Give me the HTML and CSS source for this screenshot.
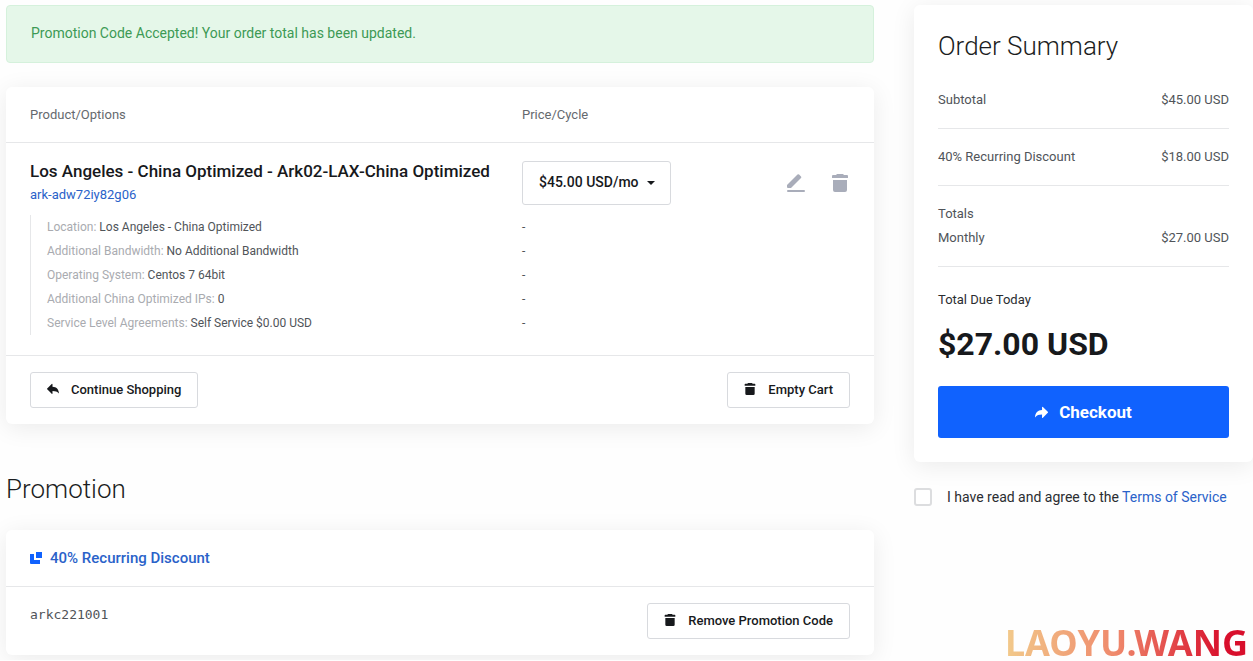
FILE: index.html
```html
<!DOCTYPE html>
<html lang="en">
<head>
  <meta charset="UTF-8">
  <meta name="viewport" content="width=device-width, initial-scale=1.0">
  <title>Review &amp; Checkout</title>
  <link rel="stylesheet" href="styles.css">
</head>
<body>
  <!-- shared icons -->
  <svg class="sprite" aria-hidden="true">
    <symbol id="trash" viewBox="0 0 16 18">
      <path d="M5 0h6l1 1h3a1 1 0 0 1 1 1v2H0V2a1 1 0 0 1 1-1h3zM1 6h14v10a2 2 0 0 1-2 2H3a2 2 0 0 1-2-2z"/>
    </symbol>
    <symbol id="pencil" viewBox="0 0 20 20">
      <path d="M1 12 11.500 1.500a1.200 1.200 0 0 1 1.600 0l1.900 1.900a1.200 1.200 0 0 1 0 1.600L5 15H2a1 1 0 0 1-1-1z"/>
      <rect x="1" y="17" width="18" height="2" rx="1"/>
    </symbol>
    <symbol id="reply" viewBox="0 0 12 12">
      <path d="M5.500 1.200v2.600C9.500 4 11.700 6.300 12 10.500c-1.800-2-3.500-2.600-6.500-2.600v2.600a.5.500 0 0 1-.8.300L.2 6.300a.6.600 0 0 1 0-.9L4.700.9a.5.500 0 0 1 .8.300z"/>
    </symbol>
    <symbol id="share" viewBox="0 0 12 12">
      <path d="M6.500 1.200v2.600C2.500 4 .3 6.300 0 10.500c1.800-2 3.500-2.600 6.500-2.600v2.600a.5.500 0 0 0 .8.300l4.500-4.500a.6.600 0 0 0 0-.9L7.300.9a.5.500 0 0 0-.8.300z"/>
    </symbol>
    <symbol id="promo" viewBox="0 0 12 12">
      <path d="M6 0h6v6H6zM0 2h4v6h6v4H1a1 1 0 0 1-1-1z"/>
    </symbol>
  </svg>

  <div class="wrap">
    <main>
      <div class="alert">Promotion Code Accepted! Your order total has been updated.</div>

      <form class="card" action="">
        <table class="cart">
          <thead>
            <tr>
              <th class="col-product">Product/Options</th>
              <th class="col-price">Price/Cycle</th>
              <th class="col-actions"></th>
            </tr>
          </thead>
          <tbody>
            <tr class="product">
              <td>
                <h2>Los Angeles - China Optimized - Ark02-LAX-China Optimized</h2>
                <a href="##">ark-adw72iy82g06</a>
              </td>
              <td>
                <div class="cycle">
                  <select aria-label="Billing cycle">
                    <option>$45.00 USD/mo</option>
                  </select>
                </div>
              </td>
              <td>
                <div class="actions">
                  <button type="button" aria-label="Edit"><svg width="20" height="20"><use href="#pencil"/></svg></button>
                  <button type="button" aria-label="Remove"><svg width="16" height="18"><use href="#trash"/></svg></button>
                </div>
              </td>
            </tr>
            <tr class="option">
              <td><div><span>Location:</span> Los Angeles - China Optimized</div></td>
              <td colspan="2">-</td>
            </tr>
            <tr class="option">
              <td><div><span>Additional Bandwidth:</span> No Additional Bandwidth</div></td>
              <td colspan="2">-</td>
            </tr>
            <tr class="option">
              <td><div><span>Operating System:</span> Centos 7 64bit</div></td>
              <td colspan="2">-</td>
            </tr>
            <tr class="option">
              <td><div><span>Additional China Optimized IPs:</span> 0</div></td>
              <td colspan="2">-</td>
            </tr>
            <tr class="option">
              <td><div><span>Service Level Agreements:</span> Self Service $0.00 USD</div></td>
              <td colspan="2">-</td>
            </tr>
          </tbody>
        </table>
        <div class="card-footer">
          <button class="btn" type="button"><svg width="12" height="12"><use href="#reply"/></svg>Continue Shopping</button>
          <button class="btn" type="button"><svg width="12" height="12"><use href="#trash"/></svg>Empty Cart</button>
        </div>
      </form>

      <h1>Promotion</h1>
      <section class="card">
        <h3 class="promo-title"><svg width="12" height="12"><use href="#promo"/></svg>40% Recurring Discount</h3>
        <div class="card-footer">
          <code>arkc221001</code>
          <button class="btn" type="button"><svg width="12" height="12"><use href="#trash"/></svg>Remove Promotion Code</button>
        </div>
      </section>
    </main>

    <aside>
      <div class="card summary">
        <h1>Order Summary</h1>
        <ul>
          <li><p><span>Subtotal</span><span>$45.00 USD</span></p></li>
          <li><p><span>40% Recurring Discount</span><span>$18.00 USD</span></p></li>
          <li>
            <p>Totals</p>
            <p><span>Monthly</span><span>$27.00 USD</span></p>
          </li>
        </ul>
        <p class="due">Total Due Today</p>
        <p class="amount">$27.00 USD</p>
        <button class="checkout" type="button"><svg width="13" height="13"><use href="#share"/></svg>Checkout</button>
      </div>
      <div class="terms">
        <input type="checkbox" id="tos">
        <label for="tos">I have read and agree to the <a href="##">Terms of Service</a></label>
      </div>
    </aside>
  </div>

  <div class="watermark">LAOYU.WANG</div>
</body>
</html>
```

FILE: styles.css
```css
* {
  box-sizing: border-box;
  margin: 0;
  padding: 0;
}
body {
  background-color: #fefefe;
  color: #505459;
  font-family: Roboto, "Liberation Sans", sans-serif;
  font-size: 13px;
  line-height: 24px;
  overflow-x: hidden;
}
a {
  color: #2a62c9;
  text-decoration: none;
}
button,
select,
input {
  font-family: inherit;
}
button {
  cursor: pointer;
}
svg {
  fill: currentColor;
}
.sprite {
  display: none;
}
.wrap {
  display: grid;
  grid-template-columns: 1fr 339px;
  gap: 40px;
  align-items: start;
  padding: 5px 0 5px 6px;
}
h1 {
  color: #1b1d21;
  font-size: 26px;
  font-weight: 300;
  line-height: 34px;
}
.alert {
  background-color: #e5f7e9;
  border: 1px solid #d5f1dc;
  border-radius: 4px;
  color: #3d9a55;
  font-size: 14px;
  margin-bottom: 24px;
  padding: 15px 24px 17px;
}
.card {
  background-color: #fff;
  border-radius: 6px;
  box-shadow: 0 4px 24px rgba(0, 0, 0, 0.08);
}

/* cart */
.cart {
  border-bottom: 1px solid #e6e7e9;
  border-collapse: separate;
  border-spacing: 0;
  padding-bottom: 20px;
  table-layout: fixed;
  width: 100%;
}
.cart th {
  border-bottom: 1px solid #e6e7e9;
  color: #65696e;
  font-weight: 400;
  padding: 16px 0 15px;
  text-align: left;
}
.cart th:first-child,
.cart td:first-child {
  padding-left: 24px;
}
.col-product {
  width: 516px;
}
.product td {
  padding-top: 18px;
  vertical-align: top;
}
.product h2 {
  color: #17191c;
  font-size: 17px;
  font-weight: 500;
  line-height: 20px;
  margin-bottom: 2px;
}
.cycle {
  display: inline-block;
  position: relative;
  vertical-align: top;
}
.cycle select {
  appearance: none;
  background-color: #fff;
  border: 1px solid #d8dade;
  border-radius: 3px;
  color: #17191c;
  font-size: 14px;
  font-weight: 500;
  height: 44px;
  padding: 0 31px 2px 16px;
}
.cycle::after {
  border: 4px solid transparent;
  border-bottom: 0;
  border-top-color: #17191c;
  content: "";
  pointer-events: none;
  position: absolute;
  right: 16px;
  top: 20px;
}
.actions {
  align-items: center;
  display: flex;
  gap: 26px;
  height: 44px;
  justify-content: flex-end;
  padding-right: 26px;
}
.actions button {
  background: none;
  border: 0;
  color: #a9adba;
  display: flex;
}
.option td {
  font-size: 12px;
}
.option div {
  border-left: 1px solid #e6e7e9;
  padding-left: 16px;
}
.option span {
  color: #a9abb0;
}
.product + .option td {
  padding-top: 8px;
}
.card-footer {
  align-items: flex-start;
  display: flex;
  justify-content: space-between;
  padding: 16px 24px;
}
.btn {
  align-items: center;
  background-color: #fff;
  border: 1px solid #d8dade;
  border-radius: 3px;
  color: #17191c;
  display: flex;
  font-size: 13px;
  font-weight: 500;
  gap: 12px;
  height: 36px;
  padding: 0 16px 2px;
}

/* promotion */
main h1 {
  margin: 48px 0 24px;
}
.promo-title {
  align-items: center;
  border-bottom: 1px solid #e6e7e9;
  color: #2a62c9;
  display: flex;
  font-size: 15px;
  font-weight: 500;
  gap: 8px;
  padding: 16px 24px;
}
.promo-title svg {
  color: #1062fe;
}
code {
  font-family: "DejaVu Sans Mono", monospace;
  font-size: 13px;
}

/* order summary */
.summary {
  padding: 24px;
}
.summary h1 {
  margin-bottom: 9px;
}
.summary li {
  border-bottom: 1px solid #e6e7e9;
  list-style: none;
  padding: 16px 0;
}
.summary li p {
  display: flex;
  justify-content: space-between;
}
.due {
  color: #2b2d31;
  margin-top: 21px;
}
.amount {
  color: #17191c;
  font-size: 32px;
  font-weight: 700;
  line-height: 40px;
  margin: 12px 0 22px;
}
.checkout {
  align-items: center;
  background-color: #1062fe;
  border: 0;
  border-radius: 3px;
  color: #fff;
  display: flex;
  font-size: 17px;
  font-weight: 700;
  gap: 11px;
  height: 52px;
  justify-content: center;
  width: 100%;
}
.terms {
  align-items: center;
  color: #2b2d31;
  display: flex;
  font-size: 14px;
  gap: 15px;
  margin-top: 23px;
}
.terms input {
  appearance: none;
  background-color: #fff;
  border: 2px solid #dcdddf;
  border-radius: 3px;
  height: 18px;
  width: 18px;
}
.watermark {
  background-image: linear-gradient(to right, #f2ca8b, #ef8a6c 45%, #d80f2c 90%);
  background-clip: text;
  bottom: 0;
  color: transparent;
  font-family: "Noto Sans", sans-serif;
  font-size: 36px;
  font-weight: 700;
  line-height: 36px;
  position: fixed;
  right: 5px;
}
```
